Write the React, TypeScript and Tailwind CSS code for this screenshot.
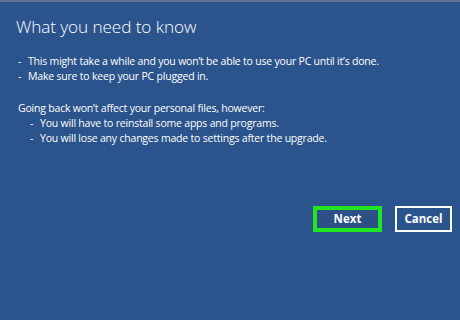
export default function App() {
  return (
    <div className="w-[460px] h-[320px] bg-[#2b538c] text-white overflow-hidden flex flex-col font-['Open_Sans',sans-serif]">
      <div className="h-[2px] bg-[#5d7497]" />
      {/* Title */}
      <h1 className="pl-[16px] pt-[13px] text-[17.2px] leading-[24px] font-light tracking-[-0.1px]">
        What you need to know
      </h1>

      {/* Body */}
      <div className="pl-[18px] mt-[15px] text-[10.5px] leading-[15px] tracking-[-0.2px]">
        <div className="flex">
          <span className="w-[10px]">-</span>
          <span>This might take a while and you won’t be able to use your PC until it’s done.</span>
        </div>
        <div className="flex">
          <span className="w-[10px]">-</span>
          <span>Make sure to keep your PC plugged in.</span>
        </div>

        <div className="mt-[17px]">Going back won’t affect your personal files, however:</div>
        <div className="flex pl-[12px]">
          <span className="w-[10px]">-</span>
          <span>You will have to reinstall some apps and programs.</span>
        </div>
        <div className="flex pl-[12px]">
          <span className="w-[10px]">-</span>
          <span>You will lose any changes made to settings after the upgrade.</span>
        </div>
      </div>

      {/* Buttons */}
      <div className="flex justify-end gap-[13px] pr-[8px] mt-[60px]">
        <button className="w-[69px] h-[26px] border-[4px] border-[#22e622] bg-[#2b4f86] text-[11.5px] font-bold leading-none">
          Next
        </button>
        <button className="w-[57px] h-[26px] border-2 border-white bg-[#2b538c] text-[11.5px] font-bold leading-none">
          Cancel
        </button>
      </div>
    </div>
  );
}
